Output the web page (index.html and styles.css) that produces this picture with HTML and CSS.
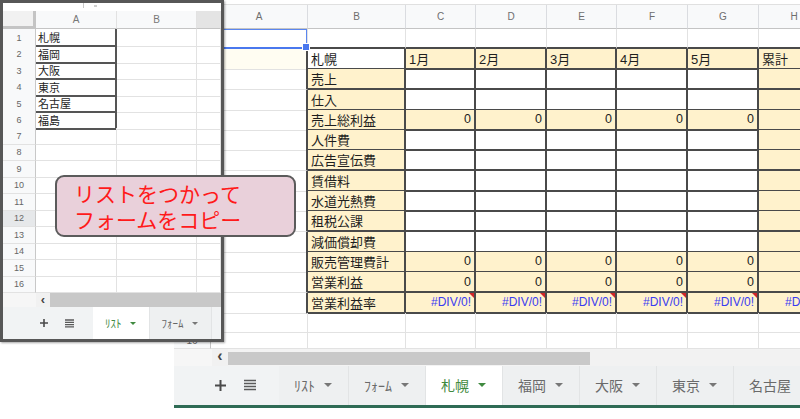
FILE: index.html
```html
<!DOCTYPE html>
<html lang="ja">
<head>
<meta charset="utf-8">
<title>Sheets</title>
<link rel="stylesheet" href="styles.css">
</head>
<body>
<div class="sheet">
  <div class="topstrip"></div>
  <div class="row hdr"><div class="c corner"></div><div class="c">A</div><div class="c">B</div><div class="c">C</div><div class="c">D</div><div class="c">E</div><div class="c">F</div><div class="c">G</div><div class="c">H</div></div>
  <div class="row r1"><div class="c rh"></div><div class="c"><div class="sel"></div></div><div class="c"></div><div class="c"></div><div class="c"></div><div class="c"></div><div class="c"></div><div class="c"></div><div class="c"></div></div>
  <div class="row tr"><div class="c rh"></div><div class="c pale"></div><div class="c">札幌</div><div class="c y">1月</div><div class="c y">2月</div><div class="c y">3月</div><div class="c y">4月</div><div class="c y">5月</div><div class="c y">累計</div></div>
  <div class="row tr"><div class="c rh"></div><div class="c"></div><div class="c y">売上</div><div class="c"></div><div class="c"></div><div class="c"></div><div class="c"></div><div class="c"></div><div class="c y"></div></div>
  <div class="row tr"><div class="c rh"></div><div class="c"></div><div class="c y">仕入</div><div class="c"></div><div class="c"></div><div class="c"></div><div class="c"></div><div class="c"></div><div class="c y"></div></div>
  <div class="row tr"><div class="c rh"></div><div class="c"></div><div class="c y">売上総利益</div><div class="c y n">0</div><div class="c y n">0</div><div class="c y n">0</div><div class="c y n">0</div><div class="c y n">0</div><div class="c y n"></div></div>
  <div class="row tr"><div class="c rh"></div><div class="c"></div><div class="c y">人件費</div><div class="c"></div><div class="c"></div><div class="c"></div><div class="c"></div><div class="c"></div><div class="c y"></div></div>
  <div class="row tr"><div class="c rh"></div><div class="c"></div><div class="c y">広告宣伝費</div><div class="c"></div><div class="c"></div><div class="c"></div><div class="c"></div><div class="c"></div><div class="c y"></div></div>
  <div class="row tr"><div class="c rh"></div><div class="c"></div><div class="c y">賃借料</div><div class="c"></div><div class="c"></div><div class="c"></div><div class="c"></div><div class="c"></div><div class="c y"></div></div>
  <div class="row tr"><div class="c rh"></div><div class="c"></div><div class="c y">水道光熱費</div><div class="c"></div><div class="c"></div><div class="c"></div><div class="c"></div><div class="c"></div><div class="c y"></div></div>
  <div class="row tr"><div class="c rh"></div><div class="c"></div><div class="c y">租税公課</div><div class="c"></div><div class="c"></div><div class="c"></div><div class="c"></div><div class="c"></div><div class="c y"></div></div>
  <div class="row tr"><div class="c rh"></div><div class="c"></div><div class="c y">減価償却費</div><div class="c"></div><div class="c"></div><div class="c"></div><div class="c"></div><div class="c"></div><div class="c y"></div></div>
  <div class="row tr"><div class="c rh"></div><div class="c"></div><div class="c y">販売管理費計</div><div class="c y n">0</div><div class="c y n">0</div><div class="c y n">0</div><div class="c y n">0</div><div class="c y n">0</div><div class="c y n"></div></div>
  <div class="row tr"><div class="c rh"></div><div class="c"></div><div class="c y">営業利益</div><div class="c y n">0</div><div class="c y n">0</div><div class="c y n">0</div><div class="c y n">0</div><div class="c y n">0</div><div class="c y n"></div></div>
  <div class="row tr"><div class="c rh"></div><div class="c"></div><div class="c y">営業利益率</div><div class="c y n err">#DIV/0!</div><div class="c y n err">#DIV/0!</div><div class="c y n err">#DIV/0!</div><div class="c y n err">#DIV/0!</div><div class="c y n err">#DIV/0!</div><div class="c y n err">#DIV/0!</div></div>
  <div class="row r15"><div class="c rh"></div><div class="c"></div><div class="c"></div><div class="c"></div><div class="c"></div><div class="c"></div><div class="c"></div><div class="c"></div><div class="c"></div></div>
  <div class="row r16"><div class="c rh">16</div><div class="c"></div><div class="c"></div><div class="c"></div><div class="c"></div><div class="c"></div><div class="c"></div><div class="c"></div><div class="c"></div></div>
  <div class="scroll"><div class="s-pad"></div><div class="s-btn">&lsaquo;</div><div class="s-thumb"></div><div class="s-rest"></div></div>
  <div class="tabs">
    <div class="tools">
      <svg class="plus" width="11" height="11" viewBox="0 0 11 11"><path d="M5.5 0v11M0 5.5h11" stroke="#4a4a4a" stroke-width="2"/></svg>
      <svg class="menu" width="12" height="12" viewBox="0 0 12 12"><path d="M0 1.5h12M0 4.5h12M0 7.5h12M0 10.5h12" stroke="#5a5a5a" stroke-width="1.7"/></svg>
    </div>
    <div class="tab">ﾘｽﾄ<i class="arr"></i></div>
    <div class="tab">ﾌｫｰﾑ<i class="arr"></i></div>
    <div class="tab on">札幌<i class="arr"></i></div>
    <div class="tab">福岡<i class="arr"></i></div>
    <div class="tab">大阪<i class="arr"></i></div>
    <div class="tab">東京<i class="arr"></i></div>
    <div class="tab">名古屋<i class="arr"></i></div>
  </div>
  <div class="bar"></div>
</div>

<div class="win">
  <div class="wtop"><span class="tick"></span><span class="tick t2"></span></div>
  <div class="wrow whdr"><div class="wc wcorner"></div><div class="wc">A</div><div class="wc">B</div><div class="wc wcx"></div></div>
  <div class="wrow wl"><div class="wc wrh">1</div><div class="wc">札幌</div><div class="wc"></div><div class="wc"></div></div>
  <div class="wrow wl"><div class="wc wrh">2</div><div class="wc">福岡</div><div class="wc"></div><div class="wc"></div></div>
  <div class="wrow wl"><div class="wc wrh">3</div><div class="wc">大阪</div><div class="wc"></div><div class="wc"></div></div>
  <div class="wrow wl"><div class="wc wrh">4</div><div class="wc">東京</div><div class="wc"></div><div class="wc"></div></div>
  <div class="wrow wl"><div class="wc wrh">5</div><div class="wc">名古屋</div><div class="wc"></div><div class="wc"></div></div>
  <div class="wrow wl"><div class="wc wrh">6</div><div class="wc">福島</div><div class="wc"></div><div class="wc"></div></div>
  <div class="wrow"><div class="wc wrh">7</div><div class="wc"></div><div class="wc"></div><div class="wc"></div></div>
  <div class="wrow"><div class="wc wrh">8</div><div class="wc"></div><div class="wc"></div><div class="wc"></div></div>
  <div class="wrow"><div class="wc wrh">9</div><div class="wc"></div><div class="wc"></div><div class="wc"></div></div>
  <div class="wrow"><div class="wc wrh">10</div><div class="wc"></div><div class="wc"></div><div class="wc"></div></div>
  <div class="wrow"><div class="wc wrh">11</div><div class="wc"></div><div class="wc"></div><div class="wc"></div></div>
  <div class="wrow"><div class="wc wrh hl">12</div><div class="wc"></div><div class="wc"></div><div class="wc"></div></div>
  <div class="wrow"><div class="wc wrh">13</div><div class="wc"></div><div class="wc"></div><div class="wc"></div></div>
  <div class="wrow"><div class="wc wrh">14</div><div class="wc"></div><div class="wc"></div><div class="wc"></div></div>
  <div class="wrow"><div class="wc wrh">15</div><div class="wc"></div><div class="wc"></div><div class="wc"></div></div>
  <div class="wrow"><div class="wc wrh">16</div><div class="wc"></div><div class="wc"></div><div class="wc"></div></div>
  <div class="wscroll"><div class="ws-pad"></div><div class="ws-btn">&lsaquo;</div><div class="ws-thumb"></div></div>
  <div class="wtabs">
    <div class="wtools">
      <svg width="8" height="8" viewBox="0 0 8 8"><path d="M4 0v8M0 4h8" stroke="#4a4a4a" stroke-width="1.6"/></svg>
      <svg width="9" height="9" viewBox="0 0 9 9"><path d="M0 1h9M0 3.3h9M0 5.6h9M0 7.9h9" stroke="#5a5a5a" stroke-width="1.3"/></svg>
    </div>
    <div class="wtab on">ﾘｽﾄ<i class="warr"></i></div>
    <div class="wtab">ﾌｫｰﾑ<i class="warr"></i></div>
  </div>
</div>

<div class="callout">リストをつかって<br>フォームをコピー</div>
</body>
</html>
```

FILE: styles.css
```css
* { box-sizing: border-box; margin: 0; padding: 0; }
html, body { width: 800px; height: 419px; overflow: hidden; background: #fff; }
body {
  position: relative;
  font-family: "Liberation Sans", "Noto Sans CJK JP", sans-serif;
  color: #1e1e1e;
}

/* ---------- background sheet ---------- */
.sheet {
  margin-left: 174px;
  width: 626px;
  height: 408px;
  overflow: hidden;
  display: flex;
  flex-direction: column;
}
.topstrip { height: 5px; flex: none; border-bottom: 1px solid #e0e0e0; }

.row {
  display: grid;
  grid-template-columns: 37px 97px 98px 70px 71px 70px 71px 71px 71px;
  height: 20.3px;
  flex: none;
}
.r1, .r15 { height: 20px; }
.r16 { height: 16px; }
.hdr { height: 24px; }

.c {
  position: relative;
  display: flex;
  align-items: center;
  padding: 0 3px;
  font-size: 13px;
  white-space: nowrap;
  border-right: 1px solid #e2e2e2;
  border-bottom: 1px solid #e2e2e2;
}
.hdr .c {
  background: #f8f9fa;
  border-right: 1px solid #dadce0;
  border-bottom: 1px solid #c4c4c4;
  color: #6e6e6e;
  font-size: 10px;
  justify-content: center;
}
.rh {
  background: #f8f9fa;
  border-right: 1px solid #c4c4c4;
  justify-content: center;
  font-size: 10px;
  color: #6a6a6a;
}
.y { background: #fff2cc; }
.pale { background: #fffdf2; }
.n { justify-content: flex-end; font-size: 12.5px; }

.tr > .c:nth-child(n+3) {
  border-right: 2px solid #4a4a4a;
  border-bottom: 2px solid #4a4a4a;
}
.tr > .c:nth-child(2) { border-right: 2px solid #4a4a4a; }
.r1 > .c:nth-child(n+3) { border-bottom: 2px solid #4a4a4a; }

.err { color: #3a3cf0; font-size: 12px; }
.err::after {
  content: "";
  position: absolute;
  top: 0;
  right: 0;
  border-left: 5px solid transparent;
  border-top: 5px solid #d0262b;
}

.sel {
  position: absolute;
  left: 0;
  top: 0;
  right: 0;
  bottom: -1px;
  border: 1px solid #5b86ef;
  border-bottom: 2px solid #4a78ee;
  z-index: 2;
}
.sel::after {
  content: "";
  position: absolute;
  right: -4px;
  bottom: -4px;
  width: 6px;
  height: 6px;
  background: #4a78ee;
  border: 1px solid #fff;
}

.scroll {
  height: 17px;
  flex: none;
  display: flex;
  background: #f3f3f3;
}
.s-pad { width: 38px; background: #f6f6f6; }
.s-btn {
  width: 16px;
  background: #f1f1f1;
  display: flex;
  align-items: center;
  justify-content: center;
  font-size: 16px;
  font-weight: bold;
  color: #444;
  line-height: 1;
  padding-bottom: 2px;
}
.s-thumb { width: 362px; margin: 3px 0 1px; background: #c9c9c9; }
.s-rest { flex: 1; background: #f2f2f2; }

.tabs {
  height: 39px;
  flex: none;
  display: flex;
  background: #f1f3f4;
}
.tools {
  width: 105px;
  flex: none;
  display: flex;
  align-items: center;
  padding-left: 41px;
  gap: 18px;
}
.tab {
  flex: none;
  display: flex;
  align-items: center;
  gap: 9px;
  padding: 0 16px 0 15px;
  font-size: 14px;
  color: #6a6a6a;
  background: #eef0f1;
  border-right: 1px solid #e2e4e5;
}
.tab.on { background: #fff; color: #3f8a3f; }
.arr {
  width: 0;
  height: 0;
  border-left: 4px solid transparent;
  border-right: 4px solid transparent;
  border-top: 4px solid #777;
}
.tab.on .arr { border-top-color: #3f8a3f; }
.bar { height: 3px; flex: none; background: #2f6b55; }

/* ---------- overlay window ---------- */
.win {
  position: absolute;
  left: 0;
  top: 0;
  width: 224px;
  height: 342px;
  border: 3px solid #575757;
  background: #fff;
  overflow: hidden;
  display: flex;
  flex-direction: column;
  box-shadow: 1px 1px 2px rgba(0, 0, 0, 0.35);
  z-index: 5;
}
.wtop { height: 8px; flex: none; position: relative; }
.tick {
  position: absolute;
  left: 80px;
  top: 0;
  width: 1px;
  height: 5px;
  background: #c8c8c8;
}
.tick.t2 { left: 91px; width: 3px; height: 2px; top: 2px; background: #cfcfcf; }

.wrow {
  display: grid;
  grid-template-columns: 33px 81px 80px 24px;
  height: 16.5px;
  flex: none;
}
.whdr { height: 18px; }
.wc {
  display: flex;
  align-items: center;
  padding: 0 2px;
  font-size: 11px;
  white-space: nowrap;
  border-right: 1px solid #e2e2e2;
  border-bottom: 1px solid #e2e2e2;
}
.whdr .wc {
  background: #f8f9fa;
  border-bottom: 1px solid #c4c4c4;
  color: #777;
  font-size: 10px;
  justify-content: center;
}
.whdr .wcorner {
  background: #f1f1f1;
  border-right: 3px solid #c4c4c4;
  border-bottom: 3px solid #c4c4c4;
}
.whdr .wcx { background: #e4e4e4; }
.wrh {
  background: #f8f9fa;
  border-right: 1px solid #c8c8c8;
  justify-content: center;
  font-size: 9px;
  color: #666;
}
.wrh.hl { background: #e6e8ea; }
.wl > .wc:nth-child(2) {
  border-right: 2px solid #555;
  border-bottom: 2px solid #555;
}

.wscroll { height: 14px; flex: none; display: flex; }
.ws-pad { width: 33px; background: #f6f6f6; }
.ws-btn {
  width: 14px;
  background: #f1f1f1;
  display: flex;
  align-items: center;
  justify-content: center;
  font-size: 13px;
  font-weight: bold;
  color: #444;
  line-height: 1;
  padding-bottom: 2px;
}
.ws-thumb { flex: 1; background: #c8c8c8; }

.wtabs {
  height: 32px;
  flex: none;
  display: flex;
  background: #f1f3f4;
}
.wtools {
  width: 90px;
  flex: none;
  display: flex;
  align-items: center;
  padding-left: 37px;
  gap: 17px;
}
.wtab {
  flex: none;
  display: flex;
  align-items: center;
  gap: 8px;
  padding: 0 13px 0 12px;
  font-size: 11px;
  color: #666;
  background: #eef0f1;
  border-right: 1px solid #e2e4e5;
}
.wtab.on { background: #fff; color: #3f8a3f; }
.warr {
  width: 0;
  height: 0;
  border-left: 3px solid transparent;
  border-right: 3px solid transparent;
  border-top: 3px solid #777;
}
.wtab.on .warr { border-top-color: #3f8a3f; }

/* ---------- callout ---------- */
.callout {
  position: absolute;
  left: 55px;
  top: 175px;
  width: 241px;
  height: 62px;
  border: 2px solid #5b5b5b;
  border-radius: 9px;
  background: #e9d0da;
  padding: 3px 0 0 17px;
  font-family: "Noto Sans CJK JP", sans-serif;
  font-size: 21px;
  line-height: 26px;
  color: #ff1a1a;
  z-index: 6;
}
```
